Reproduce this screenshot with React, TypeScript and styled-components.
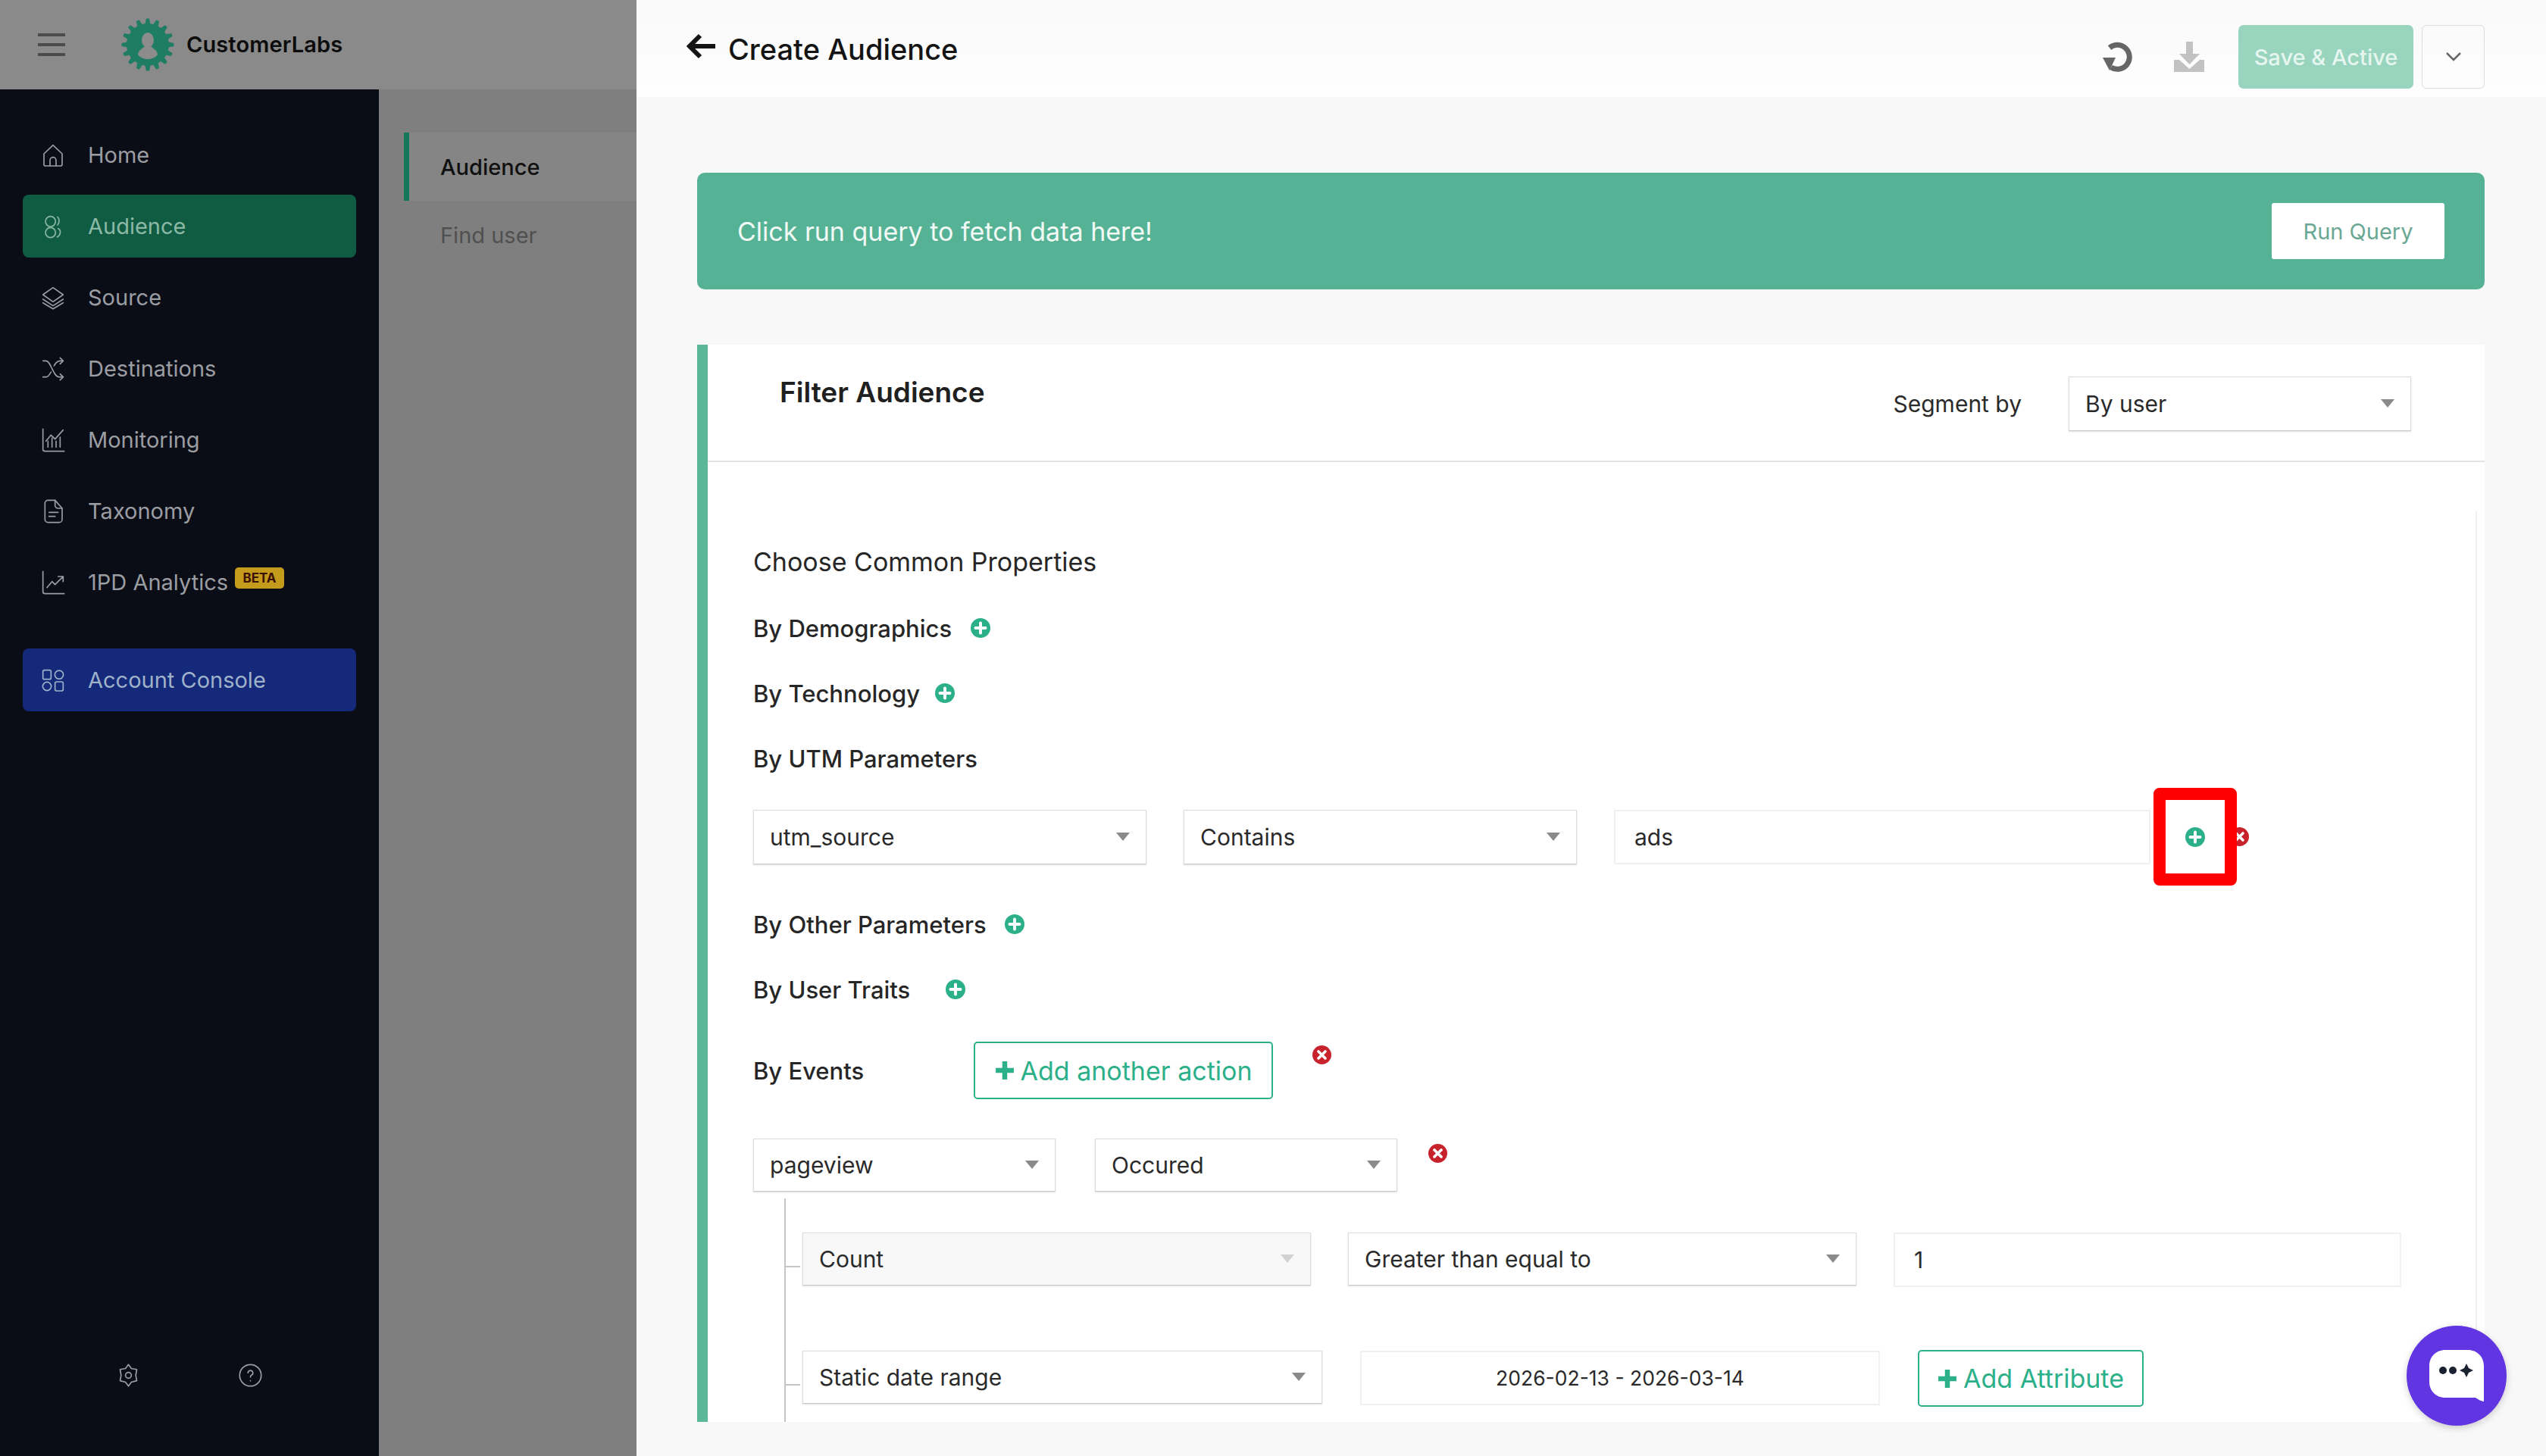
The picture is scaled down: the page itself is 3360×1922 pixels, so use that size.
import React from "react";
import styled, { createGlobalStyle } from "styled-components";

const GlobalStyle = createGlobalStyle`
  html, body {
    margin: 0;
    padding: 0;
    background: #f8f8f8;
  }
  * {
    box-sizing: border-box;
  }
`;

const GREEN = "#2bb08a";
const FONT = `Inter, "Open Sans", "Liberation Sans", sans-serif`;

const Page = styled.div`
  width: 3360px;
  height: 1922px;
  display: flex;
  overflow: hidden;
  position: relative;
  font-family: ${FONT};
  color: #222;
`;

const LeftPane = styled.div`
  width: 840px;
  flex: none;
  display: flex;
  flex-direction: column;
`;

const BrandBar = styled.div`
  height: 118px;
  flex: none;
  background: #8a8a8a;
  display: flex;
  align-items: center;
  padding-left: 50px;
`;

const Burger = styled.div`
  width: 36px;
  display: flex;
  flex-direction: column;
  gap: 9px;
  margin-right: 74px;
  span {
    display: block;
    height: 4px;
    background: #4b4b4b;
  }
`;

const BrandName = styled.div`
  margin: -2px 0 0 16px;
  font-size: 29px;
  font-weight: 600;
  letter-spacing: 0.1px;
  color: #0c0c0c;
`;

const LeftBody = styled.div`
  flex: 1;
  display: flex;
  min-height: 0;
`;

const Sidebar = styled.nav`
  width: 500px;
  flex: none;
  background: #0a0d16;
  padding: 45px 30px 0;
  display: flex;
  flex-direction: column;
`;

const NavItem = styled.div<{ $active?: boolean; $console?: boolean }>`
  height: 83px;
  margin-bottom: 11px;
  padding-left: 24px;
  border-radius: 8px;
  display: flex;
  align-items: center;
  gap: 30px;
  font-size: 29px;
  color: ${(p) => (p.$active ? "#8cb8a6" : p.$console ? "#9fb2c9" : "#9b9da3")};
  background: ${(p) => (p.$active ? "#0f5c42" : p.$console ? "#14297a" : "transparent")};
  margin-top: ${(p) => (p.$console ? "35px" : "0")};
  svg {
    width: 32px;
    height: 32px;
    flex: none;
    fill: none;
    stroke: currentColor;
    stroke-width: 1.25;
    stroke-linecap: round;
    stroke-linejoin: round;
  }
`;

const NavLabel = styled.span`
  position: relative;
`;

const BetaBadge = styled.span`
  position: absolute;
  left: 194px;
  top: -2px;
  width: 65px;
  height: 28px;
  border-radius: 5px;
  background: #c59b1c;
  color: #3b1207;
  font-size: 17px;
  font-weight: 700;
  display: flex;
  align-items: center;
  justify-content: center;
`;

const SidebarFoot = styled.div`
  margin-top: auto;
  height: 122px;
  padding-left: 124px;
  display: flex;
  gap: 130px;
  color: #9b9da3;
  svg {
    width: 31px;
    height: 31px;
    fill: none;
    stroke: currentColor;
    stroke-width: 1.3;
    stroke-linecap: round;
    stroke-linejoin: round;
  }
`;

const SubMenu = styled.div`
  flex: 1;
  background: #7f7f7f;
  padding-top: 57px;
`;

const SubItem = styled.div<{ $active?: boolean }>`
  height: 90px;
  margin-left: 33px;
  padding-left: ${(p) => (p.$active ? "41px" : "48px")};
  display: flex;
  align-items: center;
  font-size: 29px;
  font-weight: ${(p) => (p.$active ? 500 : 400)};
  color: ${(p) => (p.$active ? "#101010" : "#505050")};
  background: ${(p) => (p.$active ? "#858585" : "transparent")};
  border-left: ${(p) => (p.$active ? "7px solid #14795a" : "0")};
`;

/* main area */
const Main = styled.main`
  flex: 1;
  min-width: 0;
  display: flex;
  flex-direction: column;
`;

const TopBar = styled.header`
  height: 128px;
  flex: none;
  background: linear-gradient(#f9f9f9, #fefefe);
  display: flex;
  align-items: flex-start;
  padding: 33px 81px 0 66px;
`;

const BackTitle = styled.div`
  display: flex;
  align-items: center;
  gap: 17px;
  height: 64px;
  font-size: 38px;
  font-weight: 500;
  color: #141414;
  svg {
    width: 38px;
    height: 34px;
    margin-top: -8px;
  }
`;

const TopActions = styled.div`
  margin-left: auto;
  display: flex;
  align-items: center;
  height: 84px;
`;

const ActionIcon = styled.svg`
  width: 42px;
  height: 42px;
  margin-right: 53px;
  &:last-of-type {
    margin-right: 44px;
  }
`;

const SaveButton = styled.button`
  width: 231px;
  height: 84px;
  border: 0;
  border-radius: 7px;
  background: #99d4bf;
  color: #e6f6ef;
  font-family: ${FONT};
  font-size: 29px;
  font-weight: 500;
`;

const CaretButton = styled.div`
  width: 83px;
  height: 84px;
  margin-left: 11px;
  border: 1.5px solid #dcdcdc;
  border-radius: 6px;
  display: flex;
  align-items: center;
  justify-content: center;
  color: #666;
`;

const Content = styled.div`
  flex: 1;
  padding: 100px 81px 0 80px;
  display: flex;
  flex-direction: column;
  min-height: 0;
`;

const Banner = styled.div`
  height: 154px;
  flex: none;
  border-radius: 10px;
  background: #56b295;
  display: flex;
  align-items: center;
  justify-content: space-between;
  padding: 0 53px;
  font-size: 34px;
  color: #f2faf6;
`;

const RunButton = styled.button`
  width: 228px;
  height: 74px;
  border: 0;
  border-radius: 3px;
  background: #fff;
  color: #6aa893;
  font-family: ${FONT};
  font-size: 29px;
`;

const Card = styled.section`
  height: 1422px;
  flex: none;
  margin-top: 73px;
  background: #fff;
  border-left: 14px solid #5ab899;
  overflow: hidden;
  position: relative;
  &::after {
    content: "";
    position: absolute;
    right: 10px;
    top: 220px;
    bottom: 0;
    border-right: 2px solid #f0f0f0;
  }
`;

const CardHead = styled.div`
  height: 155px;
  border-bottom: 2px solid #e4e4e4;
  display: flex;
  padding: 37px 97px 0 95px;
`;

const CardTitle = styled.h2`
  margin: 0;
  font-size: 37px;
  font-weight: 600;
  line-height: 52px;
  color: #202020;
`;

const SegmentRow = styled.div`
  margin-left: auto;
  display: flex;
  align-items: center;
  gap: 62px;
  height: 71px;
  margin-top: 5px;
  font-size: 30px;
  color: #2a2a2a;
`;

const FormBody = styled.div`
  padding: 109px 60px 0;
`;

const Title = styled.div`
  height: 44px;
  display: flex;
  align-items: center;
  font-size: 34px;
  color: #262626;
`;

const PropRow = styled.div<{ $top: number; $gap?: number }>`
  height: 44px;
  margin-top: ${(p) => p.$top}px;
  display: flex;
  align-items: center;
  gap: ${(p) => p.$gap ?? 20}px;
  font-size: 31px;
  font-weight: 500;
  color: #262626;
`;

const EventsLabel = styled(PropRow)`
  width: 291px;
  flex: none;
`;

const FieldRow = styled.div<{ $top: number; $gap?: number }>`
  display: flex;
  align-items: center;
  gap: ${(p) => p.$gap ?? 49}px;
  margin-top: ${(p) => p.$top}px;
`;

const Field = styled.div<{ $w: number; $h?: number; $muted?: boolean; $center?: boolean }>`
  width: ${(p) => p.$w}px;
  height: ${(p) => p.$h ?? 72}px;
  flex: none;
  position: relative;
  display: flex;
  align-items: center;
  justify-content: ${(p) => (p.$center ? "center" : "flex-start")};
  padding-left: ${(p) => (p.$center ? "0" : "21px")};
  background: ${(p) => (p.$muted ? "#f8f8f8" : "#fff")};
  font-size: ${(p) => (p.$center ? "26.500px" : "30px")};
  color: #2a2a2a;
`;

const SelectBox = styled(Field)`
  border: 1px solid #dcdcdc;
  border-bottom-color: #c9c9c9;
  box-shadow: 0 1px 2px rgba(0, 0, 0, 0.14);
  &::after {
    content: "";
    position: absolute;
    right: 21px;
    top: 50%;
    margin-top: -6px;
    border-left: 9px solid transparent;
    border-right: 9px solid transparent;
    border-top: 11px solid ${(p) => (p.$muted ? "#d2d2d2" : "#8a8a8a")};
  }
`;

const InputBox = styled(Field)`
  border: 2px solid #f0f0f0;
  border-radius: 1px;
  padding-left: ${(p) => (p.$center ? "0" : "25px")};
`;

const OutlineButton = styled.button<{ $w: number; $h: number; $size: number }>`
  width: ${(p) => p.$w}px;
  height: ${(p) => p.$h}px;
  flex: none;
  border: 2px solid ${GREEN};
  border-radius: 5px;
  background: #fff;
  color: ${GREEN};
  font-family: ${FONT};
  font-size: ${(p) => p.$size}px;
  display: flex;
  align-items: center;
  justify-content: center;
  gap: 8px;
  padding: 0;
  svg {
    width: 26px;
    height: 26px;
  }
`;

const HighlightBox = styled.div`
  position: absolute;
  left: 1848px;
  top: -29px;
  width: 110px;
  height: 129px;
  border: 16px solid #ff0000;
  border-radius: 8px;
  background: #fff;
  display: flex;
  align-items: center;
  justify-content: center;
`;

const UtmRow = styled(FieldRow)`
  position: relative;
`;

const DeleteAt = styled.span`
  position: absolute;
  left: 1949px;
  top: 23px;
  display: flex;
`;

const Tree = styled.div`
  margin: 9px 0 0 41px;
  border-left: 2px solid #c4c4c4;
  padding: 45px 0 200px 22px;
`;

const TreeRow = styled(FieldRow)`
  position: relative;
  align-items: flex-start;
  &::before {
    content: "";
    position: absolute;
    left: -22px;
    top: 44px;
    width: 19px;
    border-top: 2px solid #c4c4c4;
  }
`;

const RaisedButton = styled(OutlineButton)`
  margin-top: -1px;
`;

const OffsetDelete = styled.span<{ $up: number; $left: number }>`
  display: flex;
  margin-top: -${(p) => p.$up}px;
  margin-left: ${(p) => p.$left}px;
`;

const ChatBubble = styled.div`
  position: absolute;
  left: 3176px;
  top: 1750px;
  width: 132px;
  height: 132px;
  border-radius: 50%;
  background: #6235e3;
  box-shadow: 0 3px 10px rgba(0, 0, 0, 0.18);
  display: flex;
  align-items: center;
  justify-content: center;
  svg {
    width: 74px;
    height: 70px;
  }
`;

const Plus = () => (
  <svg width="26" height="26" viewBox="0 0 26 26">
    <circle cx="13" cy="13" r="13" fill={GREEN} />
    <path d="M13 6.500v13M6.500 13h13" stroke="#fff" strokeWidth="4" strokeLinecap="round" />
  </svg>
);

const Remove = () => (
  <svg width="25" height="25" viewBox="0 0 25 25">
    <circle cx="12.500" cy="12.500" r="12.500" fill="#c8232c" />
    <path d="M8 8l9 9M17 8l-9 9" stroke="#fff" strokeWidth="3.600" strokeLinecap="round" />
  </svg>
);

const PlusGlyph = () => (
  <svg viewBox="0 0 24 24">
    <path d="M12 1v22M1 12h22" stroke={GREEN} strokeWidth="6" />
  </svg>
);

const teeth = Array.from({ length: 16 }, (_, i) => (i * 360) / 16);

const Logo = () => (
  <svg width="70" height="74" viewBox="0 0 70 74">
    <g fill="#1f7d63">
      <circle cx="35" cy="37" r="28" />
      {teeth.map((a) => (
        <path key={a} d="M30.500 14L33 2.500h4L39.500 14z" transform={`rotate(${a} 35 37)`} />
      ))}
    </g>
    <g fill="#8c8c8c">
      <ellipse cx="35" cy="31" rx="8" ry="10" />
      <path d="M22 50c1-7 7-8 10-12h6c3 4 9 5 10 12c-3 4-8 6-13 6s-10-2-13-6z" />
    </g>
  </svg>
);

const icons: Record<string, React.ReactNode> = {
  home: (
    <svg viewBox="0 0 24 24">
      <path d="M3 10.500L12 2l9 8.500V21a1.500 1.500 0 0 1-1.500 1.500h-15A1.500 1.500 0 0 1 3 21z" />
      <path d="M9 22.500V17a3 3 0 0 1 6 0v5.500" />
    </svg>
  ),
  audience: (
    <svg viewBox="0 0 24 24">
      <circle cx="9.500" cy="7" r="5" />
      <circle cx="9.500" cy="18" r="5" />
      <path d="M16.500 2.500c2 1.500 2 6 0 8M17 14c3 1 3 6.500-1 8.500" />
    </svg>
  ),
  source: (
    <svg viewBox="0 0 24 24">
      <path d="M12 2l10 7-10 7L2 9z" />
      <path d="M2 13.500l10 6.500 10-6.500M2 17l10 6 10-6" />
    </svg>
  ),
  shuffle: (
    <svg viewBox="0 0 24 24">
      <path d="M2 4h3c5 0 7 16 13 16h4M2 20h3c2 0 3.500-2 5-5M13 9c1.500-3 3-5 6-5h3" />
      <path d="M19 1l3 3-3 3M19 17l3 3-3 3" />
    </svg>
  ),
  chart: (
    <svg viewBox="0 0 24 24">
      <path d="M2 1v20a2 2 0 0 0 2 2h19" />
      <path d="M5 13l5-6 4 4 8-9M7 19v-6M11 19v-9M15 19v-6M19 19V9" />
    </svg>
  ),
  doc: (
    <svg viewBox="0 0 24 24">
      <path d="M4 4a3 3 0 0 1 3-3h7l7 8v11a3 3 0 0 1-3 3H7a3 3 0 0 1-3-3z" />
      <path d="M14 1v5a3 3 0 0 0 3 3h4M8 13h9M8 17h6" />
    </svg>
  ),
  trend: (
    <svg viewBox="0 0 24 24">
      <path d="M2 1v20a2 2 0 0 0 2 2h19" />
      <path d="M6 17l5-6 3 3 8-8M17 6h5v5" />
    </svg>
  ),
  grid: (
    <svg viewBox="0 0 24 24">
      <rect x="2" y="2" width="8" height="9" rx="1.500" />
      <circle cx="18" cy="6.500" r="4.200" />
      <circle cx="6" cy="18" r="4.200" />
      <rect x="14" y="13.500" width="8" height="9" rx="1.500" />
    </svg>
  ),
};

const navItems = [
  { label: "Home", icon: "home" },
  { label: "Audience", icon: "audience", active: true },
  { label: "Source", icon: "source" },
  { label: "Destinations", icon: "shuffle" },
  { label: "Monitoring", icon: "chart" },
  { label: "Taxonomy", icon: "doc" },
  { label: "1PD Analytics", icon: "trend", beta: true },
];

const App = () => {
  return (
    <Page>
      <GlobalStyle />
      <LeftPane>
        <BrandBar>
          <Burger>
            <span />
            <span />
            <span />
          </Burger>
          <Logo />
          <BrandName>CustomerLabs</BrandName>
        </BrandBar>
        <LeftBody>
          <Sidebar>
            {navItems.map((item) => (
              <NavItem key={item.label} $active={item.active}>
                {icons[item.icon]}
                <NavLabel>
                  {item.label}
                  {item.beta && <BetaBadge>BETA</BetaBadge>}
                </NavLabel>
              </NavItem>
            ))}
            <NavItem $console>
              {icons.grid}
              Account Console
            </NavItem>
            <SidebarFoot>
              <svg viewBox="0 0 24 24">
                <path d="M12 1l3 4 5.500 1-1 6 1 5.500-5.500 1.500-3 4-3-4-5.500-1.500 1-5.500-1-6L9 5z" />
                <circle cx="12" cy="12" r="3" />
              </svg>
              <svg viewBox="0 0 24 24">
                <circle cx="12" cy="12" r="11" />
                <path d="M9.500 9.500a2.500 2.500 0 1 1 3.500 2.300c-.8.4-1 1-1 2M12 17.500v.1" />
              </svg>
            </SidebarFoot>
          </Sidebar>
          <SubMenu>
            <SubItem $active>Audience</SubItem>
            <SubItem>Find user</SubItem>
          </SubMenu>
        </LeftBody>
      </LeftPane>

      <Main>
        <TopBar>
          <BackTitle>
            <svg viewBox="0 0 38 34">
              <path d="M18 3L4 17l14 14M5 17h33" fill="none" stroke="#141414" strokeWidth="6" />
            </svg>
            Create Audience
          </BackTitle>
          <TopActions>
            <ActionIcon viewBox="0 0 42 42">
              <path d="M11 9a16 16 0 1 1 2 26" fill="none" stroke="#666" strokeWidth="7" />
              <path d="M2 22h17l-8 17z" fill="#666" />
            </ActionIcon>
            <ActionIcon viewBox="0 0 42 42">
              <path d="M17 1h9v16h9L21.500 31 8 17h9z" fill="#c2c2c2" />
              <path d="M1 25h7l13.500 12L35 25h6v16H1z" fill="#c2c2c2" />
            </ActionIcon>
            <SaveButton>Save &amp; Active</SaveButton>
            <CaretButton>
              <svg width="20" height="12" viewBox="0 0 20 12">
                <path d="M1 1l9 9 9-9" fill="none" stroke="currentColor" strokeWidth="2.500" />
              </svg>
            </CaretButton>
          </TopActions>
        </TopBar>

        <Content>
          <Banner>
            Click run query to fetch data here!
            <RunButton>Run Query</RunButton>
          </Banner>

          <Card>
            <CardHead>
              <CardTitle>Filter Audience</CardTitle>
              <SegmentRow>
                Segment by
                <SelectBox $w={452}>By user</SelectBox>
              </SegmentRow>
            </CardHead>

            <FormBody>
              <Title>Choose Common Properties</Title>
              <PropRow $top={44} $gap={25}>
                By Demographics <Plus />
              </PropRow>
              <PropRow $top={42}>
                By Technology <Plus />
              </PropRow>
              <PropRow $top={42}>By UTM Parameters</PropRow>

              <UtmRow $top={46}>
                <SelectBox $w={519}>utm_source</SelectBox>
                <SelectBox $w={519}>Contains</SelectBox>
                <InputBox $w={708}>ads</InputBox>
                <DeleteAt>
                  <Remove />
                </DeleteAt>
                <HighlightBox>
                  <Plus />
                </HighlightBox>
              </UtmRow>

              <PropRow $top={57} $gap={24}>
                By Other Parameters <Plus />
              </PropRow>
              <PropRow $top={42} $gap={47}>
                By User Traits <Plus />
              </PropRow>

              <FieldRow $top={47} $gap={0}>
                <EventsLabel $top={0}>By Events</EventsLabel>
                <OutlineButton $w={395} $h={76} $size={34}>
                  <PlusGlyph />
                  Add another action
                </OutlineButton>
                <OffsetDelete $up={42} $left={52}>
                  <Remove />
                </OffsetDelete>
              </FieldRow>

              <FieldRow $top={52} $gap={52}>
                <SelectBox $w={399} $h={70}>
                  pageview
                </SelectBox>
                <SelectBox $w={399} $h={70}>
                  Occured
                </SelectBox>
                <OffsetDelete $up={32} $left={-11}>
                  <Remove />
                </OffsetDelete>
              </FieldRow>

              <Tree>
                <TreeRow $top={0}>
                  <SelectBox $w={671} $h={70} $muted>
                    Count
                  </SelectBox>
                  <SelectBox $w={671} $h={70}>
                    Greater than equal to
                  </SelectBox>
                  <InputBox $w={670} $h={72}>
                    1
                  </InputBox>
                </TreeRow>
                <TreeRow $top={84} $gap={50}>
                  <SelectBox $w={686} $h={70}>
                    Static date range
                  </SelectBox>
                  <InputBox $w={686} $center>
                    2026-02-13 - 2026-03-14
                  </InputBox>
                  <RaisedButton $w={298} $h={75} $size={34}>
                    <PlusGlyph />
                    Add Attribute
                  </RaisedButton>
                </TreeRow>
              </Tree>
            </FormBody>
          </Card>
        </Content>
      </Main>

      <ChatBubble>
        <svg viewBox="0 0 74 70">
          <path
            d="M22 1h30c12 0 21 9 21 21v47c-4 0-9-4-11-5H22C10 64 1 55 1 43V22C1 10 10 1 22 1z"
            fill="#fff"
          />
          <circle cx="19" cy="28" r="5" fill="#1d2233" />
          <circle cx="32" cy="28" r="5" fill="#1d2233" />
          <path d="M50 19l3 6 6 3-6 3-3 6-3-6-6-3 6-3z" fill="#1d2233" />
        </svg>
      </ChatBubble>
    </Page>
  );
};

export default App;
